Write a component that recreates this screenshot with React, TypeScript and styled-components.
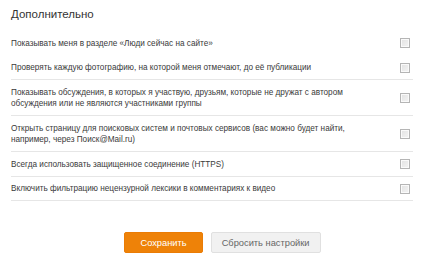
import * as React from 'react'
import styled, { createGlobalStyle } from 'styled-components'

const GlobalStyle = createGlobalStyle`
  html, body {
    margin: 0;
    padding: 0;
    background: #fff;
  }
  body {
    font-family: 'Liberation Sans', Arial, sans-serif;
    color: #333;
  }
`

const Panel = styled.div`
  width: 424px;
  padding: 7px 11px 0 11px;
  box-sizing: border-box;
`

const Title = styled.h3`
  margin: 0 0 10px 0;
  font-size: 11.5px;
  font-weight: normal;
  line-height: 14px;
  color: #333;
`

const List = styled.div`
  display: flex;
  flex-direction: column;
`

const Row = styled.label<{ $divider?: boolean }>`
  display: flex;
  align-items: center;
  justify-content: space-between;
  padding: 6.5px 0 5.5px 0;
  border-bottom: 1px solid ${props => (props.$divider ? '#e6e6e6' : 'transparent')};
  cursor: pointer;
`

const RowText = styled.span`
  max-width: 345px;
  font-size: 8.2px;
  line-height: 11.5px;
  color: #3a3a3a;
`

const Box = styled.span`
  flex: none;
  width: 8px;
  height: 8px;
  margin-right: 3px;
  border: 1px solid #b5b5b5;
  background: linear-gradient(135deg, #e2e2e2 0%, #f4f4f4 100%);
  box-shadow: inset 0 0 0 1px #fafafa;
`

const Actions = styled.div`
  display: flex;
  justify-content: center;
  gap: 8px;
  margin-top: 31px;
  padding-left: 21px;
`

const Button = styled.button<{ $primary?: boolean }>`
  height: 21px;
  padding: 0 ${props => (props.$primary ? '15px' : '10px')};
  font-family: 'Liberation Sans', Arial, sans-serif;
  font-size: 9.3px;
  border-radius: 2px;
  border: 1px solid ${props => (props.$primary ? '#ea7c05' : '#e0e0e0')};
  background: ${props => (props.$primary ? '#ee8208' : '#f1f1f1')};
  color: ${props => (props.$primary ? '#fff' : '#666')};
  cursor: pointer;
`

const options = [
  { text: 'Показывать меня в разделе «Люди сейчас на сайте»', divider: false },
  { text: 'Проверять каждую фотографию, на которой меня отмечают, до её публикации', divider: true },
  {
    text: 'Показывать обсуждения, в которых я участвую, друзьям, которые не дружат с автором обсуждения или не являются участниками группы',
    divider: true,
  },
  {
    text: 'Открыть страницу для поисковых систем и почтовых сервисов (вас можно будет найти, например, через Поиск@Mail.ru)',
    divider: true,
  },
  { text: 'Всегда использовать защищенное соединение (HTTPS)', divider: true },
  { text: 'Включить фильтрацию нецензурной лексики в комментариях к видео', divider: true },
]

const App: React.FC = () => (
  <>
    <GlobalStyle />
    <Panel>
      <Title>Дополнительно</Title>
      <List>
        {options.map(o => (
          <Row key={o.text} $divider={o.divider}>
            <RowText>{o.text}</RowText>
            <Box />
          </Row>
        ))}
      </List>
      <Actions>
        <Button $primary>Сохранить</Button>
        <Button>Сбросить настройки</Button>
      </Actions>
    </Panel>
  </>
)

export default App
